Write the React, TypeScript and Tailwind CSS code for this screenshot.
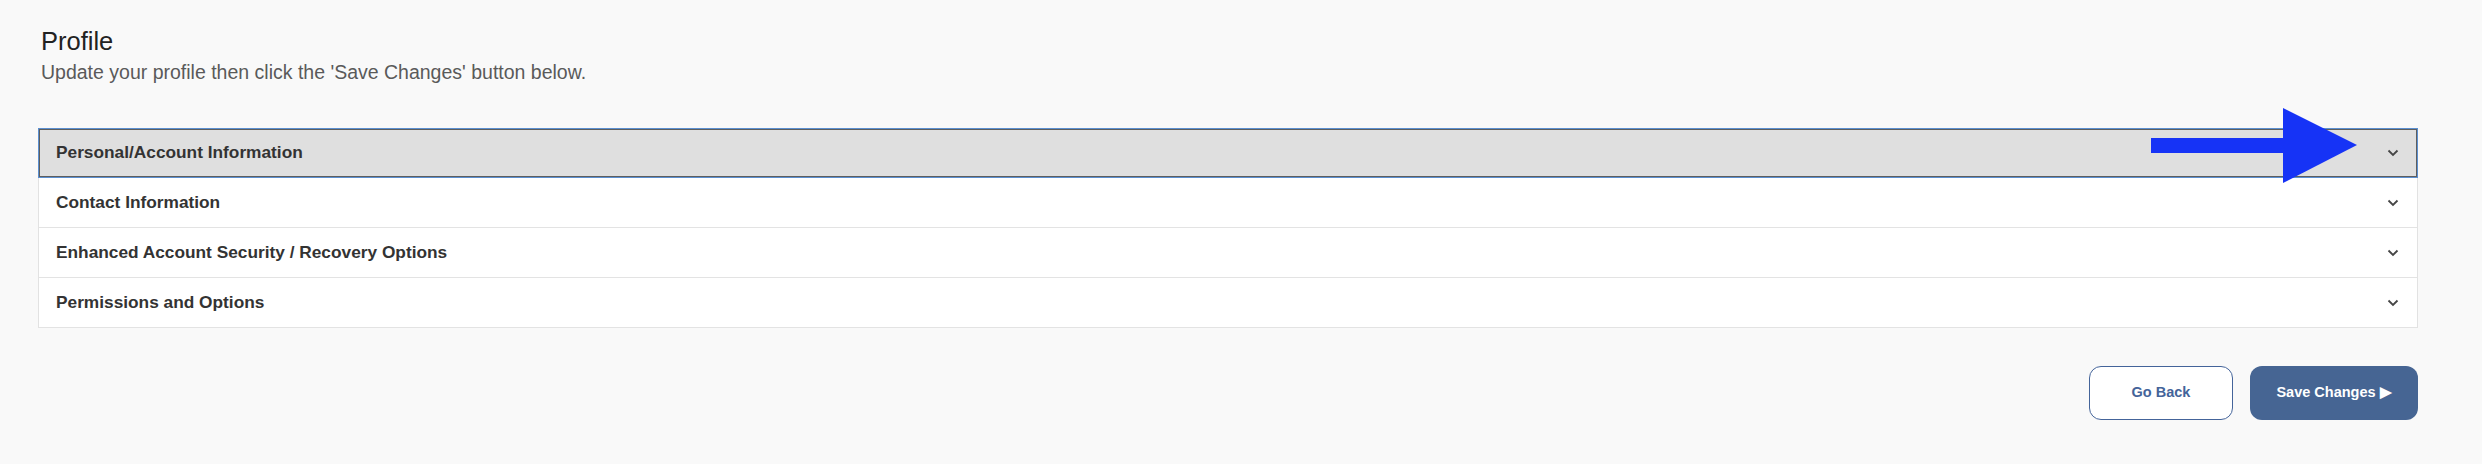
const sections = [
  "Personal/Account Information",
  "Contact Information",
  "Enhanced Account Security / Recovery Options",
  "Permissions and Options",
];

function Chevron() {
  return (
    <svg width="12" height="8" viewBox="0 0 12 8" fill="none">
      <path d="M1.5 1.5 L6 6 L10.5 1.5" stroke="#454545" strokeWidth="1.8" />
    </svg>
  );
}

function PointerArrow() {
  return (
    <svg width="206" height="76" viewBox="0 0 206 76" className="absolute right-[61px] -top-[20px] z-10">
      <rect x="0" y="30" width="134" height="15" fill="#1633f6" />
      <polygon points="132,0 206,37 132,75" fill="#1633f6" />
    </svg>
  );
}

export default function App() {
  return (
    <div className="min-h-screen bg-[#f9f9f9] pl-[38px] pr-[64px] pt-[26px] font-['Liberation_Sans',Arial,sans-serif]">
      <div className="pl-[3px]">
        <h1 className="text-[25.5px] leading-[30px] text-[#222222]">Profile</h1>
        <p className="mt-[4px] text-[19.5px] leading-[24px] text-[#5a5a5a]">
          Update your profile then click the 'Save Changes' button below.
        </p>
      </div>

      <div className="mt-[44px] bg-white border-x border-[#e2e2e2]">
        {sections.map((title, i) => (
          <div
            key={i}
            className={
              i === 0
                ? "relative h-[50px] flex items-center justify-between pl-[18px] pr-[19px] bg-[#dfdfdf] shadow-[inset_0_0_0_1px_#5b8fd0,inset_0_0_0_2px_#5e5e5e] -mx-px"
                : "h-[50px] flex items-center justify-between pl-[17px] pr-[18px] border-b border-[#e3e3e3]"
            }
          >
            <span className="text-[17.3px] font-bold text-[#333333]">{title}</span>
            <Chevron />
            {i === 0 && <PointerArrow />}
          </div>
        ))}
      </div>

      <div className="mt-[38px] flex justify-end gap-[17px]">
        <button className="w-[144px] h-[54px] rounded-[12px] border border-[#44649a] bg-white text-[14.5px] font-bold text-[#44649a]">
          Go Back
        </button>
        <button className="w-[168px] h-[54px] rounded-[12px] bg-[#466593] text-[14.5px] font-bold text-white">
          Save Changes ▶
        </button>
      </div>
    </div>
  );
}
